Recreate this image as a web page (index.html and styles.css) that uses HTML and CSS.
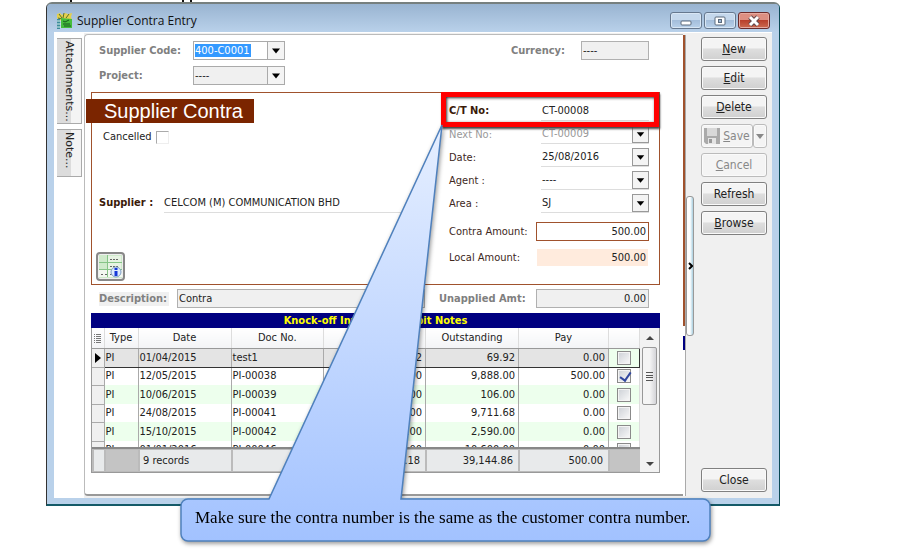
FILE: index.html
```html
<!DOCTYPE html>
<html lang="en">
<head>
<meta charset="utf-8">
<title>Supplier Contra Entry</title>
<link rel="stylesheet" href="styles.css">
</head>
<body>
<main class="stage">
  <svg class="trim" width="150" height="2" viewBox="0 0 150 2" aria-hidden="true"><path d="M24 0h2v2h-2zM136 0h2v2h-2zM144 0h2v2h-2z" fill="#111"/></svg>
  <section class="window">
    <header class="titlebar">
      <svg width="17" height="17" viewBox="0 0 17 17" aria-hidden="true">
        <path d="M1 2l3-1 2 2 3-2 3 1 4-1-1 4 1 3-12 1-3-3z" fill="#e5d04c"/>
        <path d="M3 2l3 4M8 1L7 6M13 2l-3 4M2 6l4 1" stroke="#55702c" fill="none"/>
        <rect x="1" y="7" width="3" height="10" fill="#3b8b9b"/>
        <path d="M1 9h4M1 12h4M1 15h4" stroke="#d9f0e8"/>
        <path d="M5 6l11 1v9H5z" fill="#46bd3c"/>
        <path d="M7 9l2 1 4-2M7 12h7M8 14h7" stroke="#17581d" fill="none"/>
      </svg>
      <h1>Supplier Contra Entry</h1>
      <div class="winbtns">
        <button aria-label="Minimize"><svg width="14" height="12" viewBox="0 0 14 12"><rect x="2" y="6" width="10" height="4" rx="1" fill="#fff" stroke="#5b6a7c"/></svg></button>
        <button aria-label="Maximize"><svg width="14" height="12" viewBox="0 0 14 12"><rect x="2" y="2" width="10" height="8" rx="1" fill="#fff" stroke="#5b6a7c"/><rect x="5.500" y="4.500" width="3" height="3" fill="#9db8d6" stroke="#5b6a7c"/></svg></button>
        <button class="x" aria-label="Close window"><svg width="14" height="12" viewBox="0 0 14 12"><path d="M3 2l8 8M11 2l-8 8" stroke="#64474b" stroke-width="5"/><path d="M3 2l8 8M11 2l-8 8" stroke="#fff" stroke-width="3"/></svg></button>
      </div>
    </header>
    <div class="client">
      <nav class="tabs">
        <button class="tab attach">Attachments...</button>
        <button class="tab note">Note...</button>
      </nav>
      <form class="panel">
        <div class="top">
          <label class="b" for="code">Supplier Code:</label>
          <span class="combo"><select id="code" class="picked"><option>400-C0001</option></select><svg class="arrow" viewBox="0 0 16 16"><path d="M4 6h8l-4 5z"/></svg></span>
          <label class="b cur" for="cur">Currency:</label>
          <input id="cur" class="box" value="----" readonly>
          <label class="b" for="proj">Project:</label>
          <span class="combo grey"><select id="proj"><option>----</option></select><svg class="arrow" viewBox="0 0 16 16"><path d="M4 6h8l-4 5z"/></svg></span>
        </div>
        <div class="card">
          <div class="left">
            <h2>Supplier Contra</h2>
            <label class="cancel">Cancelled <input type="checkbox"></label>
            <div class="supplier"><label class="b dark" for="sup">Supplier :</label><input id="sup" value="CELCOM (M) COMMUNICATION BHD"></div>
            <button type="button" class="calc" aria-label="Calculation info"><svg width="23" height="23" viewBox="0 0 23 23">
              <path d="M0 0h23v23H0z" fill="#cfeacb"/>
              <path d="M9 1h13v6H9zM9 8h13v6H9z" fill="#e7f3e3"/><path d="M0 15h23v7H0z" fill="#f3f7f1"/>
              <path d="M0 7.500h23M0 14.500h23M8.500 0v22" stroke="#86c487"/>
              <path d="M11 4.500h9M11 11.500h9M2 19.500h2M6 19.500h3M11 19.500h3" stroke="#666" stroke-dasharray="2 1"/>
              <circle cx="17" cy="17" r="5" fill="#dceafc" stroke="#7d9cc4"/><path d="M17 13v2M17 16v5" stroke="#1438d8" stroke-width="3"/></svg></button>
          </div>
          <div class="right">
            <label class="dark strong" for="ct">C/T No:</label><input id="ct" class="line" value="CT-00008">
            <label class="faint" for="next">Next No:</label><span class="combo flat"><select id="next" class="faint"><option>CT-00009</option></select><svg class="arrow" viewBox="0 0 16 16"><path d="M4 6h8l-4 5z"/></svg></span>
            <label for="date">Date:</label><span class="combo flat"><select id="date"><option>25/08/2016</option></select><svg class="arrow" viewBox="0 0 16 16"><path d="M4 6h8l-4 5z"/></svg></span>
            <label for="agent">Agent :</label><span class="combo flat"><select id="agent"><option>----</option></select><svg class="arrow" viewBox="0 0 16 16"><path d="M4 6h8l-4 5z"/></svg></span>
            <label for="area">Area :</label><span class="combo flat"><select id="area"><option>SJ</option></select><svg class="arrow" viewBox="0 0 16 16"><path d="M4 6h8l-4 5z"/></svg></span>
            <label class="gap" for="amt">Contra Amount:</label><input id="amt" class="amt gap" value="500.00">
            <label class="gap" for="loc">Local Amount:</label><input id="loc" class="amt local gap" value="500.00" readonly>
            <div class="mark"></div>
          </div>
        </div>
        <div class="desc">
          <label class="b tint" for="desc">Description:</label><input id="desc" class="box" value="Contra">
          <label class="b" for="un">Unapplied Amt:</label><input id="un" class="box num" value="0.00" readonly>
        </div>
        <div class="gridbox">
          <h3>Knock-off Invoices &amp; Debit Notes</h3>
          <div class="gridrow">
            <div class="gridmain">
              <div class="clip">
                <table>
                  <colgroup><col class="c0"><col class="c1"><col class="c2"><col><col class="c4"><col class="c2"><col class="c6"><col class="c7"></colgroup>
                  <thead><tr><th><svg width="8" height="10" viewBox="0 0 8 10"><path d="M0 1.500h1M2 1.500h5M0 3.500h1M2 3.500h5M0 5.500h1M2 5.500h5M0 7.500h1M2 7.500h5M0 9.500h1M2 9.500h5" stroke="#777"/></svg></th><th>Type</th><th>Date</th><th>Doc No.</th><th>Amount</th><th>Outstanding</th><th>Pay</th><th></th></tr></thead>
                  <tbody>
                    <tr class="cursor"><td><svg width="6" height="10" viewBox="0 0 6 10"><path d="M0 0l6 5-6 5z"/></svg></td><td>PI</td><td>01/04/2015</td><td>test1</td><td>69.92</td><td>69.92</td><td>0.00</td><td><input type="checkbox" aria-label="Pay test1"></td></tr>
                    <tr><td></td><td>PI</td><td>12/05/2015</td><td>PI-00038</td><td>9,888.00</td><td>9,888.00</td><td>500.00</td><td><input type="checkbox" checked aria-label="Pay PI-00038"></td></tr>
                    <tr><td></td><td>PI</td><td>10/06/2015</td><td>PI-00039</td><td>106.00</td><td>106.00</td><td>0.00</td><td><input type="checkbox" aria-label="Pay PI-00039"></td></tr>
                    <tr><td></td><td>PI</td><td>24/08/2015</td><td>PI-00041</td><td>9,712.00</td><td>9,711.68</td><td>0.00</td><td><input type="checkbox" aria-label="Pay PI-00041"></td></tr>
                    <tr><td></td><td>PI</td><td>15/10/2015</td><td>PI-00042</td><td>2,590.00</td><td>2,590.00</td><td>0.00</td><td><input type="checkbox" aria-label="Pay PI-00042"></td></tr>
                    <tr><td></td><td>PI</td><td>01/01/2016</td><td>PI-00046</td><td>10,600.00</td><td>10,600.00</td><td>0.00</td><td><input type="checkbox" aria-label="Pay PI-00046"></td></tr>
                  </tbody>
                </table>
              </div>
              <table class="sum">
                <colgroup><col class="c0"><col class="c1"><col class="c2"><col><col class="c4"><col class="c2"><col class="c6"><col class="c7"></colgroup>
                <tbody><tr><td></td><td class="void"></td><td>9 records</td><td></td><td>39,145.18</td><td>39,144.86</td><td>500.00</td><td class="void"></td></tr></tbody>
              </table>
            </div>
            <div class="scroll">
              <svg width="8" height="4" viewBox="0 0 8 4"><path d="M0 4l4-4 4 4z" fill="#444"/></svg>
              <div class="thumb"><svg width="7" height="9" viewBox="0 0 7 9"><path d="M0 .5h7M0 3.500h7M0 5.500h7M0 8.500h7" stroke="#555"/></svg></div>
              <svg class="down" width="8" height="4" viewBox="0 0 8 4"><path d="M0 0l4 4 4-4z" fill="#444"/></svg>
            </div>
          </div>
        </div>
      </form>
      <div class="edge"></div>
      <div class="split"><div class="grip"><svg width="5" height="8" viewBox="0 0 5 8"><path d="M1 1l3 3-3 3" fill="none" stroke="#000" stroke-width="2"/></svg></div></div>
      <aside>
        <button class="act"><span><u>N</u>ew</span></button>
        <button class="act"><span><u>E</u>dit</span></button>
        <button class="act"><span><u>D</u>elete</span></button>
        <div class="save"><button class="act" disabled><svg width="16" height="16" viewBox="0 0 16 16"><path d="M0 0h16v16H2l-2-2z" fill="#aaa"/><path d="M3 0h10v8H3z" fill="#d8d8d8"/><path d="M4 10h8v6H4z" fill="#e4e4e4"/><path d="M5 11h3v4H5z" fill="#999"/></svg><span><u>S</u>ave</span></button><button class="act more" disabled aria-label="Save options"><svg width="8" height="5" viewBox="0 0 8 5"><path d="M0 0h8L4 5z" fill="#888"/></svg></button></div>
        <button class="act" disabled><span><u>C</u>ancel</span></button>
        <button class="act">Refresh</button>
        <button class="act"><span><u>B</u>rowse</span></button>
        <button class="act close">Close</button>
      </aside>
    </div>
  </section>
  <div class="callout">
    <svg width="540" height="430" viewBox="0 0 540 430" aria-hidden="true">
      <defs><linearGradient id="sky" x1="0" y1="0" x2="0" y2="1"><stop offset="0" stop-color="#e6efff"/><stop offset="1" stop-color="#a2c2ff"/></linearGradient></defs>
      <path d="M263 1L90 375H9a7 7 0 0 0-7 7v28a7 7 0 0 0 7 7h515a7 7 0 0 0 7-7v-28a7 7 0 0 0-7-7H222z" fill="url(#sky)" stroke="#4f81bd" stroke-width="1.500"/>
    </svg>
    <p>Make sure the contra number is the same as the customer contra number.</p>
  </div>
</main>
</body>
</html>
```
FILE: styles.css
```css
* { box-sizing: border-box; }
body { margin: 0; background: #fff; }
body, input, select, button { font: 11px/14px "DejaVu Sans Condensed", "DejaVu Sans", sans-serif; color: #222; }
h1, h2, h3, p { margin: 0; font-weight: normal; }
svg { display: block; flex: none; }
input { min-width: 0; }
.stage { position: relative; padding: 2px 123px 0 46px; min-height: 551px; }
.trim { position: absolute; left: 46px; top: 0; }

/* Window frame */
.window { border: 1px solid #333; border-top: 2px solid #77807f; border-right-color: #0a4a55; border-bottom: 2px solid #145a68; border-radius: 6px 6px 0 0; background: #b9d1ea; padding: 0 7px 6px; }
.titlebar { display: flex; align-items: center; gap: 4px; height: 28px; margin: 0 -7px; padding: 5px 9px 0 9px; background: linear-gradient(#99b4d1, #b9d1ea); border-radius: 4px 4px 0 0; }
.titlebar h1 { flex: 1; font: 12px/16px "Open Sans", sans-serif; color: #111; }
.winbtns { display: flex; gap: 2px; }
.winbtns button { display: flex; justify-content: center; align-items: center; width: 32px; height: 17px; padding: 0; border: 1px solid #66788e; border-radius: 3px; background: linear-gradient(#c5d8ec 50%, #a4bedb 50%, #b9d1ea); box-shadow: inset 0 0 0 1px #d8e6f4; }
.winbtns .x { border-color: #6b2b2b; background: linear-gradient(#dd8f82 45%, #b9402c 50%, #cc6a50); box-shadow: inset 0 0 0 1px #e6aaa0; }

.client { display: flex; min-height: 466px; background: #f0f0f0; border-top: 1px solid #fff; }
.tabs { display: flex; flex-direction: column; gap: 5px; width: 30px; padding: 5px 2px 0 3px; background: #fff; }
.tab { width: 25px; padding: 2px; border: 1px solid #aaa; border-left: 0; background: linear-gradient(90deg, #dcdcdc 60%, #f4f4f4 60%); writing-mode: vertical-rl; font-family: "DejaVu Sans", sans-serif; text-align: left; }
.attach { height: 86px; }
.note { height: 48px; }

.panel { flex: 1; min-width: 0; margin: 1px 0 2px; padding: 6px 23px 20px 6px; background: #fff; border: 1px solid #bbb; border-right: 0; border-bottom: 2px solid #999; border-radius: 4px 0 0 4px; }
.edge { width: 3px; margin: 2px 0; border-right: 1px solid #aaa; background: linear-gradient(#a0522d 291px, #fff 291px, #fff 301px, #000080 301px, #000080 315px, #fff 315px); }
.b { font-weight: bold; color: #808080; }
.dark { color: #3a1a08; }
.strong { font-weight: bold; }

/* Header fields */
.top { display: grid; grid-template-columns: 94px 92px 1fr 68px; row-gap: 6px; align-items: center; padding: 0 11px 0 8px; }
.cur { text-align: right; padding-right: 16px; }
.box { width: 100%; height: 19px; padding: 0 1px; border: 1px solid #b0b0b0; background: #f0f0f0; }
.combo { position: relative; display: block; height: 19px; border: 1px solid #aaa; background: #fff; }
.grey { background: #f0f0f0; }
.combo select { width: 100%; height: 100%; padding: 0 18px 0 1px; border: 0; appearance: none; background: none; }
.combo .picked { color: #fff; background: linear-gradient(#3399ff, #3399ff) 1px 2px / 56px 13px no-repeat; }
.combo .arrow { position: absolute; right: 0; top: 0; width: 17px; height: 17px; border-left: 1px solid #aaa; background: #f4f4f4; pointer-events: none; }

/* Contra card */
.card { display: flex; margin: 7px 0 4px; height: 193px; border: 1px solid #a0522d; }
.left { display: flex; flex-direction: column; align-items: flex-start; flex: 1; min-width: 0; padding: 6px 0 3px 4px; }
h2 { width: 168px; margin-left: -10px; padding-left: 18px; background: #7b2500; color: #fff; font: 20px/24px "Liberation Sans", sans-serif; }
.cancel { display: flex; align-items: center; gap: 4px; margin: 7px 0 0 7px; }
.cancel input { appearance: none; width: 13px; height: 13px; margin: 0; border: 1px solid #eee; border-top-color: #aaa; border-left-color: #aaa; }
.supplier { display: flex; align-items: center; align-self: stretch; margin: 49px 20px 0 3px; }
.supplier label { width: 65px; }
.supplier input { flex: 1; height: 20px; padding: 0; border: 0; border-bottom: 1px solid #ddd; }
.calc { display: flex; justify-content: center; align-items: center; width: 29px; height: 29px; margin: auto 0 0 0; padding: 0; border: 2px solid #888; border-radius: 4px; background: #eee; }
.right { position: relative; display: grid; grid-template-columns: 87px 113px; grid-template-rows: 24px repeat(4, 23px); align-items: center; align-content: start; width: 219px; padding: 6px 10px 0 9px; color: #40281c; }
.right .combo, .right .line { margin-left: 5px; }
.line { height: 20px; padding: 0 1px; border: 0; border-bottom: 1px solid #ddd; }
.right .faint { color: #999; }
.flat { border: 0; border-bottom: 1px solid #ddd; }
.flat .arrow { height: 18px; border: 1px solid #999; }
.amt { height: 19px; padding: 0 2px; border: 1px solid #a0522d; text-align: right; }
.gap { margin-top: 7px; }
.local { border-color: #fff; background: #ffebdd; }
.mark { position: absolute; left: 1px; right: 0; top: -1px; height: 35px; border: 5px solid #f00; box-shadow: 1px 2px 2px #444, inset 1px 1px 3px #333; }

.desc { display: grid; grid-template-columns: 70px 1fr 111px 113px; align-items: center; padding: 0 11px 0 8px; }
.desc #desc { margin-left: 8px; width: auto; }
.desc label[for="un"] { padding-left: 14px; }
.tint { background: #f0f0f0; }
.desc .num { text-align: right; padding-right: 2px; }

/* Knock-off grid */
.gridbox { margin-top: 5px; border: 1px solid #999; border-top: 0; }
h3 { margin: 0 -1px; background: #000080; color: #ff0; font-size: 11px; font-weight: bold; line-height: 15px; text-align: center; }
.gridrow { display: flex; }
.gridmain { flex: 1; min-width: 0; }
.clip { height: 121px; overflow: hidden; border-bottom: 2px solid #888; }
table { width: 100%; table-layout: fixed; border-collapse: collapse; }
.c0 { width: 12px; } .c1 { width: 34px; } .c2 { width: 93px; } .c4 { width: 102px; } .c6 { width: 90px; } .c7 { width: 31px; }
th { height: 20px; padding: 0; border-right: 1px solid #ddd; border-bottom: 1px solid #999; background: linear-gradient(#fff, #f3f4f6); font-weight: normal; }
th svg, td svg { margin: 0 auto; }
td { height: 19px; padding: 0 3px 0 1px; border-right: 1px solid #aaa; white-space: nowrap; overflow: hidden; }
tr:nth-child(even) td { height: 18px; }
tbody tr:nth-child(odd) td { background: #edffed; }
.clip tbody td:first-child { padding: 0; background: #f0f0f0; border-bottom: 1px solid #aaa; }
td:nth-child(n+5) { text-align: right; }
.clip td:last-child { padding: 0; border-right: 1px solid #ddd; text-align: center; }
.clip .cursor td:nth-child(n+2):nth-child(-n+7) { background: #e4e4e4; }
.cursor td:nth-child(n+2) { border-top: 1px solid #333; border-bottom: 1px solid #333; }
.cursor td:last-child { border-right: 1px solid #333; }
td input { appearance: none; display: block; width: 14px; height: 14px; margin: 0 auto; border: 1px solid #8a8a8a; background: linear-gradient(135deg, #ccd0d6, #fafafa); box-shadow: inset 0 0 0 1px #f4f4f4; }
td input:checked::after { content: ""; display: block; width: 5px; height: 9px; margin: 0 0 0 4px; border: solid #31479e; border-width: 0 2px 2px 0; transform: rotate(35deg); }
.sum tbody tr td { height: 22px; padding: 0 5px 0 3px; border: 2px solid #bbb; border-width: 1px 0 1px 2px; background: #e8eaeb; }
.sum tbody tr .void { background: #c4c4c4; }
.scroll { display: flex; flex-direction: column; align-items: center; width: 19px; padding: 8px 0 6px; background: #f2f2f2; }
.thumb { display: flex; justify-content: center; align-items: center; width: 15px; height: 58px; margin-top: 7px; border: 1px solid #999; border-radius: 2px; background: linear-gradient(90deg, #f5f5f5 50%, #d4d4d8); }
.down { margin-top: auto; }

/* Sidebar */
.split { width: 9px; padding-top: 163px; }
.grip { display: flex; align-items: center; justify-content: center; width: 8px; height: 140px; border: 1px solid #999; border-radius: 3px; background: linear-gradient(90deg, #fff 50%, #a9cfe0); }
aside { display: flex; flex-direction: column; gap: 5px; width: 77px; padding: 4px 5px 6px 6px; }
.act { display: flex; justify-content: center; align-items: center; gap: 3px; height: 24px; padding: 0; border: 1px solid #808080; border-radius: 3px; background: linear-gradient(#f4f4f4 45%, #dedede 50%, #d0d0d0); box-shadow: inset 0 0 0 1px #fafafa; font-size: 12px; }
.act:disabled { border-color: #bbb; background: #f4f4f4; color: #888; }
.save { display: flex; }
.save .act { flex: 1; }
.save .more { flex: 0 0 14px; }
.close { margin-top: auto; }

/* Callout */
.callout { position: absolute; left: 179px; top: 124px; width: 540px; filter: drop-shadow(1px 2px 2px #0006); }
.callout p { position: relative; margin-top: -46px; padding-left: 16px; font: 17px/20px "Liberation Serif", serif; color: #000; white-space: nowrap; }
```
